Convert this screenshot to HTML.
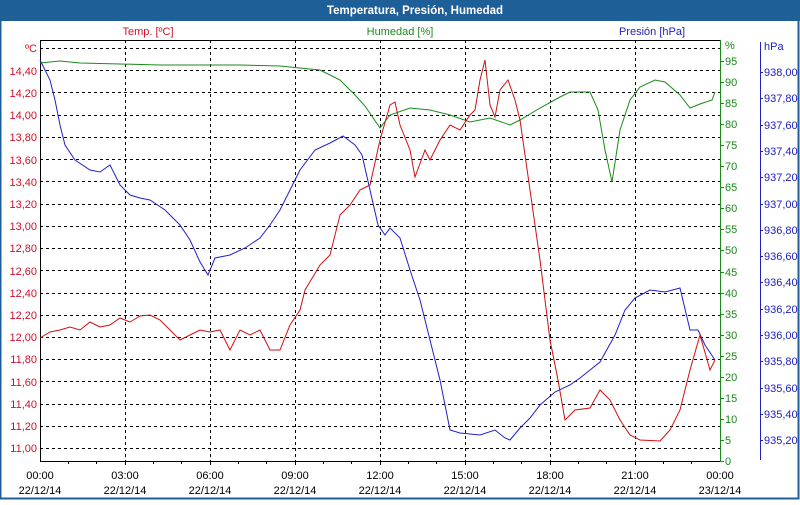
<!DOCTYPE html>
<html><head><meta charset="utf-8"><style>
html,body{margin:0;padding:0;background:#fff;}
body{width:800px;height:500px;overflow:hidden;font-family:Tahoma,"Liberation Sans",sans-serif;}
</style></head><body>
<svg width="800" height="500" xmlns="http://www.w3.org/2000/svg" font-family="Liberation Sans, sans-serif" font-size="11">
<rect x="0" y="0" width="800" height="500" fill="#fff"/>
<rect x="0" y="0" width="800" height="21" fill="#1f5f98"/>
<rect x="0.5" y="20" width="798" height="478.5" fill="none" stroke="#1f5f98" stroke-width="2"/>
<text x="415" y="14" fill="#fff" font-weight="bold" font-size="11.5" text-anchor="middle">Temperatura, Presión, Humedad</text>
<text x="148" y="35" fill="#d0102a" text-anchor="middle">Temp. [ºC]</text>
<text x="400" y="35" fill="#1a8a1a" text-anchor="middle">Humedad [%]</text>
<text x="652" y="35" fill="#2020c0" text-anchor="middle">Presión [hPa]</text>
<g stroke="#000" stroke-dasharray="3,3" stroke-width="1">
<path d="M40 48.5H720M40 70.5H720M40 92.5H720M40 115.5H720M40 137.5H720M40 159.5H720M40 181.5H720M40 204.5H720M40 226.5H720M40 248.5H720M40 270.5H720M40 293.5H720M40 315.5H720M40 337.5H720M40 359.5H720M40 381.5H720M40 404.5H720M40 426.5H720M40 448.5H720"/>
<path d="M125.5 40V461M210.5 40V461M295.5 40V461M380.5 40V461M465.5 40V461M550.5 40V461M635.5 40V461"/>
</g>
<path d="M40.5 461V40.5H720" stroke="#000" fill="none"/>
<path d="M40 461.5H720" stroke="#000"/>
<g stroke="#000"><path d="M68.5 461v3M96.5 461v3M125.5 461v4M153.5 461v3M181.5 461v3M210.5 461v4M238.5 461v3M266.5 461v3M295.5 461v4M323.5 461v3M351.5 461v3M380.5 461v4M408.5 461v3M436.5 461v3M465.5 461v4M493.5 461v3M521.5 461v3M550.5 461v4M578.5 461v3M606.5 461v3M635.5 461v4M663.5 461v3M691.5 461v3"/></g>
<g fill="#d0102a" text-anchor="end">
<text x="37" y="52">ºC</text><text x="37" y="75">14,40</text><text x="37" y="97">14,20</text><text x="37" y="119">14,00</text><text x="37" y="141">13,80</text><text x="37" y="164">13,60</text><text x="37" y="186">13,40</text><text x="37" y="208">13,20</text><text x="37" y="230">13,00</text><text x="37" y="252">12,80</text><text x="37" y="275">12,60</text><text x="37" y="297">12,40</text><text x="37" y="319">12,20</text><text x="37" y="341">12,00</text><text x="37" y="363">11,80</text><text x="37" y="386">11,60</text><text x="37" y="408">11,40</text><text x="37" y="430">11,20</text><text x="37" y="452">11,00</text>
</g>
<path d="M720.5 40V462" stroke="#1a8a1a"/>
<g stroke="#1a8a1a"><path d="M720 461.5h4M720 440.5h4M720 419.5h4M720 398.5h4M720 377.5h4M720 356.5h4M720 335.5h4M720 314.5h4M720 293.5h4M720 272.5h4M720 250.5h4M720 229.5h4M720 208.5h4M720 187.5h4M720 166.5h4M720 145.5h4M720 124.5h4M720 103.5h4M720 82.5h4M720 61.5h4"/></g>
<g fill="#1a8a1a">
<text x="725" y="49">%</text><text x="725" y="65">95</text><text x="725" y="86">90</text><text x="725" y="107">85</text><text x="725" y="128">80</text><text x="725" y="149">75</text><text x="725" y="170">70</text><text x="725" y="191">65</text><text x="725" y="212">60</text><text x="725" y="233">55</text><text x="725" y="254">50</text><text x="725" y="276">45</text><text x="725" y="297">40</text><text x="725" y="318">35</text><text x="725" y="339">30</text><text x="725" y="360">25</text><text x="725" y="381">20</text><text x="725" y="402">15</text><text x="725" y="423">10</text><text x="725" y="444">5</text><text x="725" y="465">0</text>
</g>
<path d="M760.5 42V460" stroke="#2020c0"/>
<g stroke="#2020c0"><path d="M760 72.5h3M760 98.5h3M760 125.5h3M760 151.5h3M760 177.5h3M760 204.5h3M760 230.5h3M760 256.5h3M760 282.5h3M760 309.5h3M760 335.5h3M760 361.5h3M760 388.5h3M760 414.5h3M760 440.5h3"/></g>
<g fill="#2020c0">
<text x="764" y="50">hPa</text><text x="764" y="76">938,00</text><text x="764" y="102">937,80</text><text x="764" y="129">937,60</text><text x="764" y="155">937,40</text><text x="764" y="181">937,20</text><text x="764" y="208">937,00</text><text x="764" y="234">936,80</text><text x="764" y="260">936,60</text><text x="764" y="286">936,40</text><text x="764" y="313">936,20</text><text x="764" y="339">936,00</text><text x="764" y="365">935,80</text><text x="764" y="392">935,60</text><text x="764" y="418">935,40</text><text x="764" y="444">935,20</text>
</g>
<g fill="#000" text-anchor="middle">
<text x="40" y="479">00:00</text><text x="40" y="494">22/12/14</text>
<text x="125" y="479">03:00</text><text x="125" y="494">22/12/14</text>
<text x="210" y="479">06:00</text><text x="210" y="494">22/12/14</text>
<text x="295" y="479">09:00</text><text x="295" y="494">22/12/14</text>
<text x="380" y="479">12:00</text><text x="380" y="494">22/12/14</text>
<text x="465" y="479">15:00</text><text x="465" y="494">22/12/14</text>
<text x="550" y="479">18:00</text><text x="550" y="494">22/12/14</text>
<text x="635" y="479">21:00</text><text x="635" y="494">22/12/14</text>
<text x="720" y="479">00:00</text><text x="720" y="494">23/12/14</text>
</g>
<polyline fill="none" stroke="#1a8a1a" points="40,63 60,61 80,63 120,64 160,65 200,65 240,65 280,66 300,68 320,70 340,80 355,95 365,106 380,128 390,115 410,108 430,110 450,115 470,122 490,118 510,125 520,120 540,108 560,97 570,92 590,92 598,110 605,150 612,182 620,130 630,100 640,87 655,80 665,82 680,95 690,108 700,104 712,100 715,92"/>
<polyline fill="none" stroke="#2020d0" points="40,60 50,80 55,100 60,125 65,145 75,160 90,170 100,172 110,165 120,185 130,195 140,198 150,200 165,210 180,225 190,240 200,262 208,275 215,258 230,255 245,248 260,238 270,225 280,210 290,190 300,170 315,150 330,143 343,136 355,145 362,155 370,190 378,225 385,235 390,228 400,238 410,270 420,300 430,340 440,380 450,430 460,433 480,435 495,430 505,438 510,440 520,428 530,418 540,405 555,392 570,385 580,378 600,362 615,335 625,310 635,298 650,290 665,292 680,288 690,330 698,330 705,345 715,360"/>
<polyline fill="none" stroke="#d01010" points="40,338 50,332 60,330 70,327 80,330 90,322 100,327 110,325 120,318 130,322 140,316 150,315 160,320 170,330 180,340 190,335 200,330 210,332 220,330 230,350 240,330 250,335 260,330 270,350 280,350 290,325 300,310 305,290 320,265 330,255 340,215 350,205 360,190 370,185 380,140 390,105 395,102 400,125 410,150 415,177 425,150 430,160 440,140 450,125 460,130 470,115 475,110 480,80 485,60 490,105 495,117 500,90 508,80 515,100 520,120 530,190 540,260 550,340 558,380 565,420 575,410 590,408 600,390 610,400 620,420 630,435 640,440 660,441 670,430 680,410 690,370 700,335 710,370 715,360"/>
</svg>
</body></html>
